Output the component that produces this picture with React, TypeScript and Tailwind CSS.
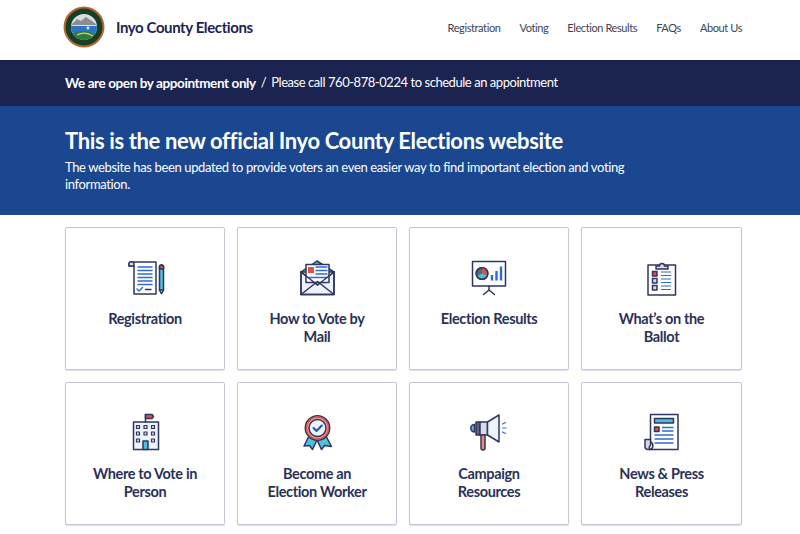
const navy = "#2f3660";
const blue = "#2f6bd0";
const cyan = "#4cc0dc";
const red = "#e2503f";
const pale = "#eef2fd";

function Seal() {
  return (
    <svg width="42" height="42" viewBox="0 0 42 42">
      <circle cx="21" cy="21" r="20.5" fill="#b5682f" />
      <circle cx="21" cy="21" r="18.5" fill="#163f26" />
      <circle cx="21" cy="21" r="13" fill="#d9dee0" />
      <path d="M8 19 L14 13 L18 15 L23 11 L29 15 L34 19 Z" fill="#8b8f8c" />
      <path d="M8 20 H34 A13 13 0 0 1 32 28 H10 A13 13 0 0 1 8 20 Z" fill="#2d74c9" />
      <path d="M10 28 Q18 22 32 28 A13 13 0 0 1 10 28 Z" fill="#2f7a3d" />
      <path d="M14 29 Q22 25 30 30" stroke="#e5cf64" strokeWidth="1.2" fill="none" />
      <circle cx="25" cy="22" r="1.4" fill="#e8eef2" />
    </svg>
  );
}

function Icon({ children }: { children: React.ReactNode }) {
  return (
    <svg width="48" height="48" viewBox="0 0 48 48" fill="none" stroke={navy} strokeWidth="1.5" strokeLinejoin="round" strokeLinecap="round" className="block">
      {children}
    </svg>
  );
}

const icons: Record<string, React.ReactNode> = {
  registration: (
    <Icon>
      <path d="M11 8 H35 V40 H13 V12 H8 V10 A2 2 0 0 1 11 8 Z" fill="#fff" />
      <path d="M13 12 V10 A2 2 0 0 0 11 8 A2 2 0 0 0 8 10 V12 Z" fill="#d8dbe6" />
      <path d="M17 13 H31 M17 16.5 H31 M17 20 H31 M17 23.5 H31 M17 27 H31 M17 30.5 H31" stroke={blue} strokeWidth="1.5" />
      <path d="M16 35 L18 37 L21.5 33.5" stroke={blue} strokeWidth="1.5" />
      <path d="M24.5 35.5 H30" stroke={navy} strokeWidth="1.4" />
      <path d="M38.5 13 A2 2 0 0 1 42.5 13 V36 L40.5 39.5 L38.5 36 Z" fill={cyan} />
      <path d="M38.5 13 A2 2 0 0 1 42.5 13 V15 H38.5 Z" fill={red} />
      <path d="M38.5 36 H42.5 L40.5 39.5 Z" fill="#fff" />
    </Icon>
  ),
  mail: (
    <Icon>
      <path d="M8 18 L24 7 L41 18 Z" fill={cyan} />
      <path d="M8 18 V40.5 H41 V18 L24.5 31 Z" fill={pale} />
      <rect x="13" y="10.5" width="23" height="18" fill="#fff" />
      <rect x="15" y="13" width="6" height="6" fill={red} stroke="none" />
      <path d="M23 13 H34 M23 16.5 H34 M23 20 H34 M16 23.5 H34" stroke={blue} strokeWidth="1.4" />
      <path d="M8 18 L24.5 31 L41 18 M8 40.5 L24.5 27.5 L41 40.5" />
      <path d="M8 18 V40.5 H41 V18" />
    </Icon>
  ),
  results: (
    <Icon>
      <rect x="7.5" y="7.5" width="33" height="24.5" fill="#fff" />
      <circle cx="17" cy="19.5" r="5.8" fill="#5c6382" />
      <path d="M17 19.5 V13.7 A5.8 5.8 0 0 1 22.6 21 Z" fill={red} stroke="none" />
      <path d="M12 22 A5.8 5.8 0 0 0 22.4 21.5 L17 19.5 Z" fill={cyan} stroke="none" />
      <circle cx="17" cy="19.5" r="5.8" />
      <path d="M27 26.5 V21 M31.5 26.5 V17 M36 26.5 V12.5" stroke={blue} strokeWidth="2.4" strokeLinecap="butt" />
      <path d="M24 32 V36 M24 36 L18.5 40.5 M24 36 L29.5 40.5" />
    </Icon>
  ),
  ballot: (
    <Icon>
      <rect x="10" y="11" width="27.5" height="30" fill="#fff" />
      <path d="M18 15 V12 H21.5 A2.5 2.5 0 0 1 26.5 12 H30 V15 Z" fill="#d8dbe6" />
      <rect x="14.5" y="17.5" width="4.5" height="4.5" fill={red} />
      <rect x="14.5" y="24.5" width="4.5" height="4.5" fill="#d8dbe6" />
      <rect x="14.5" y="31.5" width="4.5" height="4.5" fill="#d8dbe6" />
      <path d="M23 18 H33 M23 21.5 H33 M23 25 H33 M23 28.5 H33 M23 32 H33 M23 35.5 H33" stroke={blue} strokeWidth="1.2" strokeLinecap="butt" />
    </Icon>
  ),
  building: (
    <Icon>
      <rect x="12.5" y="13" width="25" height="27.5" fill={pale} />
      <path d="M24.5 13 V5.5" />
      <path d="M24.5 5.5 H31 L32.5 7.5 L31 9.5 H24.5 Z" fill={red} />
      <g fill="#d8dbe6" strokeWidth="1.2">
        <rect x="15.5" y="16.5" width="3" height="3" />
        <rect x="23" y="16.5" width="3" height="3" />
        <rect x="30.5" y="16.5" width="3" height="3" />
        <rect x="15.5" y="23" width="3" height="3" />
        <rect x="23" y="23" width="3" height="3" />
        <rect x="30.5" y="23" width="3" height="3" />
        <rect x="15.5" y="30" width="3" height="3" />
        <rect x="30.5" y="30" width="3" height="3" />
      </g>
      <rect x="22" y="32" width="5" height="8.5" fill={cyan} />
    </Icon>
  ),
  worker: (
    <Icon>
      <path d="M16 27 L11 37 L16.5 36.5 L19.5 40.5 L24 31 L28.5 40.5 L31.5 36.5 L38.5 37.5 L33 27 Z" fill={cyan} />
      <circle cx="24.5" cy="19" r="12.2" fill="#f3a79b" />
      <circle cx="24.5" cy="19" r="11" stroke={red} strokeWidth="1.4" fill="none" />
      <circle cx="24.5" cy="19" r="8.5" fill={pale} />
      <path d="M20.5 19 L23.5 22 L28.8 16.5" stroke="#1f55b8" strokeWidth="2" />
    </Icon>
  ),
  campaign: (
    <Icon>
      <path d="M9.5 15.5 A3 3 0 0 0 9.5 23 Z" fill={cyan} />
      <rect x="11" y="13" width="4" height="13" fill="#5c6382" />
      <rect x="15" y="13" width="7.5" height="13" fill="#d8dbe6" />
      <path d="M22.5 13 L34 6 V33 L22.5 26 Z" fill={pale} />
      <path d="M16 26 H20 V39 A2 2 0 0 1 16 39 Z" fill="#f0897c" />
      <path d="M37.5 15 L40.5 13.5 M37.5 19 H41 M37.5 23 L40.5 24.5" stroke={blue} strokeWidth="1.2" />
    </Icon>
  ),
  news: (
    <Icon>
      <path d="M12.5 5.5 H40 V40.5 H12 A4 4 0 0 0 12.5 33 Z" fill="#fff" />
      <path d="M7 30.5 H12.5 V36.5 A2.5 2.5 0 0 0 12 40.5 H10 A3 3 0 0 1 7 37.5 Z" fill="#d8dbe6" />
      <rect x="16.5" y="9.5" width="19" height="4.5" fill={cyan} />
      <rect x="16.5" y="18" width="4.5" height="4.5" fill={red} />
      <path d="M24 18.5 H35.5 M24 22 H35.5 M16.5 26 H35.5 M16.5 30 H35.5 M16.5 34 H35.5" stroke={blue} strokeWidth="1.3" strokeLinecap="butt" />
    </Icon>
  ),
};

const cards: [string, string[]][] = [
  ["registration", ["Registration"]],
  ["mail", ["How to Vote by", "Mail"]],
  ["results", ["Election Results"]],
  ["ballot", ["What’s on the", "Ballot"]],
  ["building", ["Where to Vote in", "Person"]],
  ["worker", ["Become an", "Election Worker"]],
  ["campaign", ["Campaign", "Resources"]],
  ["news", ["News & Press", "Releases"]],
];

export default function App() {
  return (
    <div className="h-[534px] w-[800px] overflow-hidden bg-white font-['Lato',sans-serif]">
      <header className="flex h-[60px] items-start justify-between pl-[63px] pr-[58px] pt-[6px]">
        <div className="flex items-center gap-[11px]">
          <Seal />
          <span className="text-[15px] font-bold tracking-[-0.4px] text-[#1b2450]">Inyo County Elections</span>
        </div>
        <nav className="flex gap-[19px] pt-[14px] text-[11px] leading-[16px] tracking-[-0.4px] text-[#3d4551]">
          <span>Registration</span>
          <span>Voting</span>
          <span>Election Results</span>
          <span>FAQs</span>
          <span>About Us</span>
        </nav>
      </header>
      <div className="flex h-[46px] items-center gap-[5px] bg-[#1b2450] px-[65px] text-[13px] tracking-[-0.45px] text-white">
        <span className="text-[13.5px] font-bold tracking-[-0.4px]">We are open by appointment only</span>
        <span>/</span>
        <span>Please call 760-878-0224 to schedule an appointment</span>
      </div>
      <div className="h-[109px] bg-[#1a4790] px-[65px] pt-[20px] text-white">
        <h1 className="text-[22px] font-bold leading-[30px] tracking-[-0.36px]">This is the new official Inyo County Elections website</h1>
        <p className="mt-[3px] w-[600px] text-[13px] leading-[17px] tracking-[-0.36px]">
          The website has been updated to provide voters an even easier way to find important election and voting information.
        </p>
      </div>
      <div className="grid grid-cols-[160px_160px_160px_161px] gap-x-3 gap-y-3 pl-[65px] pt-3">
        {cards.map(([icon, lines]) => (
          <div key={icon} className="flex h-[143px] flex-col items-center rounded-[2px] border border-[#c4c7dc] pt-[26px] shadow-[0_1px_1px_rgba(120,125,170,0.25)]">
            {icons[icon]}
            <div className="mt-[8px] text-center text-[14.5px] font-bold leading-[18px] tracking-[-0.35px] text-[#2a3158]">
              {lines.map((l) => (
                <div key={l}>{l}</div>
              ))}
            </div>
          </div>
        ))}
      </div>
    </div>
  );
}
